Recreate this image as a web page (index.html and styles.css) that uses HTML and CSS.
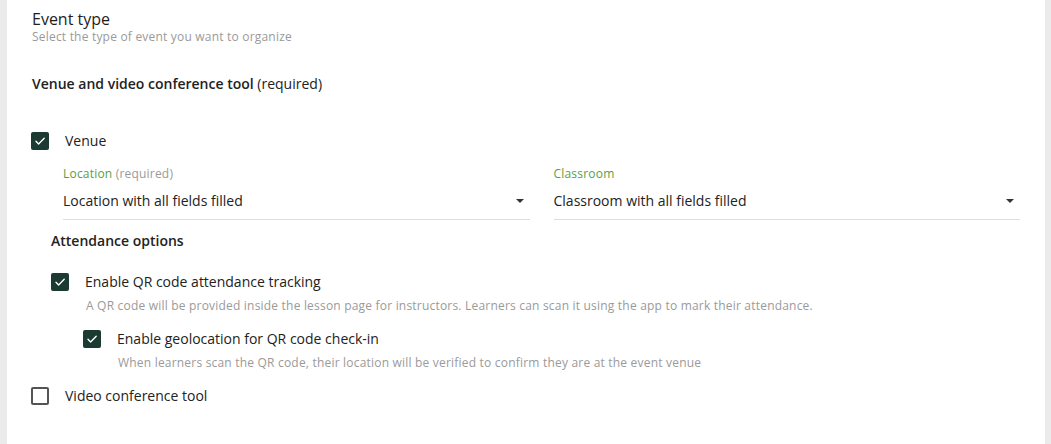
FILE: index.html
```html
<!DOCTYPE html>
<html lang="en">
<head>
<meta charset="utf-8">
<title>Event type</title>
<link rel="stylesheet" href="styles.css">
</head>
<body>
<div class="page">
  <section class="panel">
    <h2 class="title">Event type</h2>
    <p class="subtitle">Select the type of event you want to organize</p>

    <h3 class="group-label">Venue and video conference tool <span class="req">(required)</span></h3>

    <div class="check-row row-venue">
      <span class="cb checked"><svg viewBox="0 0 18 18" width="18" height="18"><path d="M5 9.3l2.6 2.6L13.2 6.3" fill="none" stroke="#fff" stroke-width="1.4" stroke-linecap="round" stroke-linejoin="round"/></svg></span>
      <span class="cb-label">Venue</span>
    </div>

    <div class="venue-body">
      <div class="fields">
        <div class="field">
          <div class="field-label">Location <span class="field-req">(required)</span></div>
          <div class="field-value"><span>Location with all fields filled</span><span class="caret"></span></div>
        </div>
        <div class="field">
          <div class="field-label">Classroom</div>
          <div class="field-value"><span>Classroom with all fields filled</span><span class="caret"></span></div>
        </div>
      </div>
    </div>

    <div class="attendance">
      <h4 class="att-title">Attendance options</h4>
      <div class="check-row row-qr">
        <span class="cb checked"><svg viewBox="0 0 18 18" width="18" height="18"><path d="M5 9.3l2.6 2.6L13.2 6.3" fill="none" stroke="#fff" stroke-width="1.4" stroke-linecap="round" stroke-linejoin="round"/></svg></span>
        <span class="cb-label">Enable QR code attendance tracking</span>
      </div>
      <p class="desc">A QR code will be provided inside the lesson page for instructors. Learners can scan it using the app to mark their attendance.</p>
      <div class="nested">
        <div class="check-row row-geo">
          <span class="cb checked"><svg viewBox="0 0 18 18" width="18" height="18"><path d="M5 9.3l2.6 2.6L13.2 6.3" fill="none" stroke="#fff" stroke-width="1.4" stroke-linecap="round" stroke-linejoin="round"/></svg></span>
          <span class="cb-label">Enable geolocation for QR code check-in</span>
        </div>
        <p class="desc">When learners scan the QR code, their location will be verified to confirm they are at the event venue</p>
      </div>
    </div>

    <div class="check-row row-video">
      <span class="cb"></span>
      <span class="cb-label">Video conference tool</span>
    </div>
  </section>
</div>
</body>
</html>
```

FILE: styles.css
```css
html, body {
  margin: 0;
  padding: 0;
  background: #ebebeb;
}
body {
  font-family: "Open Sans", "Noto Sans", sans-serif;
  color: #222;
  width: 1051px;
  height: 444px;
  overflow: hidden;
}
.page {
  display: flex;
  height: 444px;
  padding: 0 6px 0 7px;
  box-sizing: border-box;
}
.panel {
  flex: 1;
  background: #fff;
  padding: 9px 25px 0 25px;
  box-sizing: border-box;
}
.title {
  margin: 0;
  font-size: 16px;
  line-height: 20px;
  font-weight: 500;
  color: #1e1e1e;
}
.subtitle {
  margin: 0;
  font-size: 12px;
  line-height: 16px;
  letter-spacing: 0.2px;
  color: #9a9a9a;
}
.group-label {
  margin: 29px 0 0;
  font-size: 14px;
  line-height: 20px;
  font-weight: 600;
  color: #222;
}
.group-label .req {
  font-weight: 400;
}
.check-row {
  display: flex;
  align-items: center;
  height: 20px;
}
.cb {
  width: 18px;
  height: 18px;
  box-sizing: border-box;
  border: 2px solid #555;
  border-radius: 2px;
  flex: none;
  display: block;
}
.cb.checked {
  background: #1b3a31;
  border: none;
}
.cb svg {
  display: block;
}
.cb-label {
  margin-left: 16px;
  font-size: 14px;
  line-height: 20px;
  color: #222;
}
.row-venue {
  margin-top: 37px;
  margin-left: -1px;
}
.venue-body {
  padding-left: 31px;
}
.fields {
  display: grid;
  grid-template-columns: 1fr 1fr;
  column-gap: 24px;
  margin-top: 15px;
}
.field-label {
  font-size: 12px;
  line-height: 16px;
  letter-spacing: 0.2px;
  color: #58a046;
}
.field-req {
  color: #9a9a9a;
}
.field-value {
  margin-top: 9px;
  display: flex;
  align-items: center;
  justify-content: space-between;
  font-size: 14px;
  line-height: 20px;
  color: #222;
  padding-bottom: 8px;
  border-bottom: 1px solid #dedede;
}
.caret {
  width: 0;
  height: 0;
  border-left: 4px solid transparent;
  border-right: 4px solid transparent;
  border-top: 4px solid #333;
  margin-right: 6px;
}
.attendance {
  padding-left: 19px;
  margin-top: 11px;
}
.att-title {
  margin: 0;
  font-size: 14px;
  line-height: 20px;
  font-weight: 600;
  color: #222;
}
.row-qr {
  margin-top: 21px;
}
.desc {
  margin: 6px 0 0;
  padding-left: 35px;
  font-size: 12px;
  line-height: 16px;
  letter-spacing: 0.2px;
  color: #9a9a9a;
}
.nested {
  padding-left: 32px;
}
.row-geo {
  margin-top: 15px;
}
.row-video {
  margin-top: 15px;
  margin-left: -1px;
}
```
